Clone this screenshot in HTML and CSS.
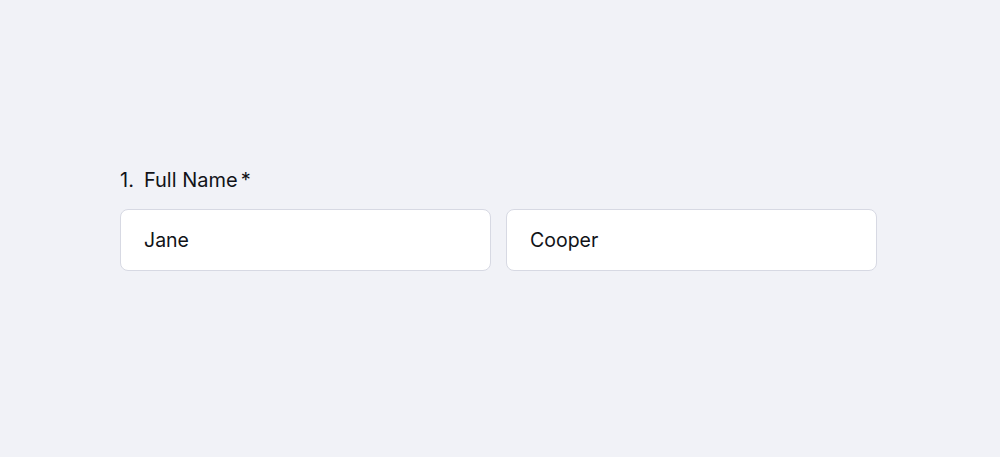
FILE: index.html
```html
<!DOCTYPE html>
<html lang="en">
<head>
    <meta charset="UTF-8">
    <meta name="viewport" content="width=device-width, initial-scale=1.0">
    <title>Full Name</title>
    <link rel="stylesheet" href="styles.css">
</head>
<body>
    <!-- Pregunta del formulario -->
    <div class="question">
        <label class="question-label">
            <span class="number">1.</span>
            <span class="title">Full Name</span><span class="required">*</span>
        </label>
        <div class="fields">
            <input class="field" type="text" value="Jane">
            <input class="field" type="text" value="Cooper">
        </div>
    </div>
</body>
</html>
```

FILE: styles.css
```css
body {
    margin: 0;
    padding: 0;
    min-height: 457px;
    background: #f1f2f7;
    font-family: 'Inter', 'Noto Sans', sans-serif;
    color: #111318;
}

.question {
    width: 757px;
    margin-left: 120px;
    padding-top: 167px;
}

.question-label {
    display: flex;
    align-items: baseline;
    font-size: 20px;
    line-height: 26px;
    margin-bottom: 16px;
}

.number {
    margin-right: 10px;
}

.required {
    margin-left: 3px;
}

.fields {
    display: grid;
    grid-template-columns: 1fr 1fr;
    gap: 15px;
}

.field {
    box-sizing: border-box;
    height: 62px;
    width: 100%;
    padding: 0 23px;
    background: #ffffff;
    border: 1px solid #d7d9e3;
    border-radius: 8px;
    font-family: inherit;
    font-size: 19.5px;
    color: #111318;
    outline: none;
}
```
